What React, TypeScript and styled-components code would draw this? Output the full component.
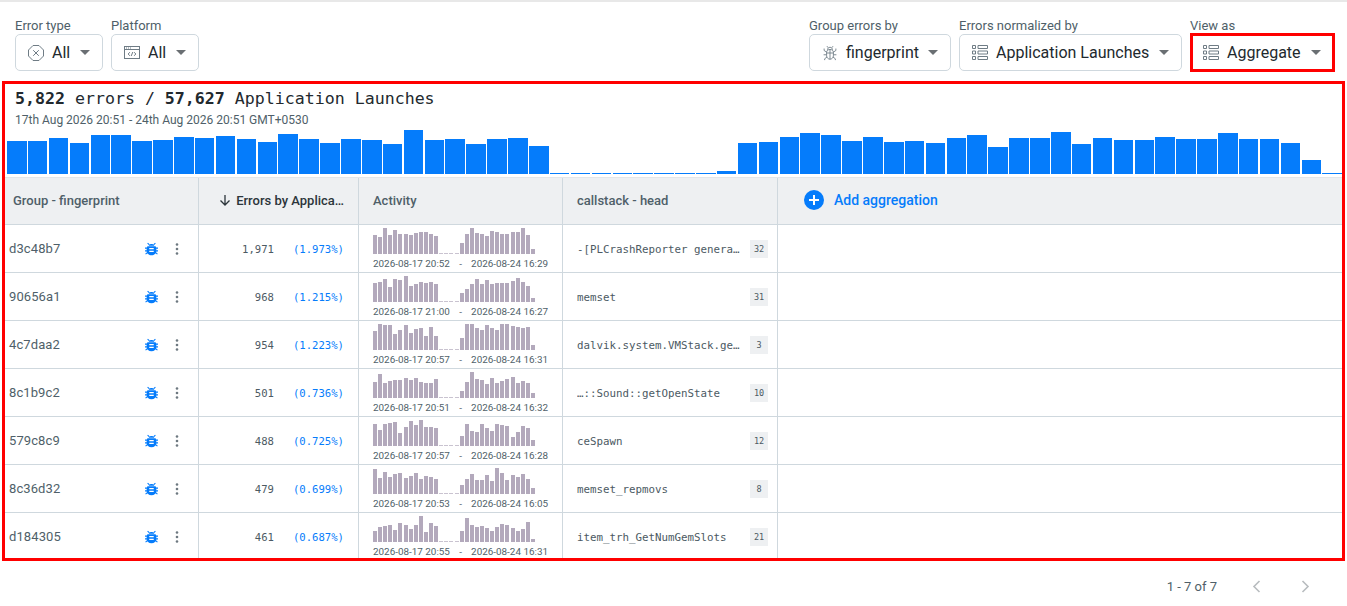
import React from "react";
import styled, { createGlobalStyle } from "styled-components";

const Global = createGlobalStyle`
  html, body { margin: 0; padding: 0; background: #fff; }
  body { font-family: Roboto, "Liberation Sans", sans-serif; color: #22292e; }
  * { box-sizing: border-box; }
`;

const MONO = `"DejaVu Sans Mono", "Liberation Mono", monospace`;
const LABEL = "#4f5f69";
const LINE = "#cfd8de";
const HEAD = "#eef0f2";
const BLUE = "#057cfb";

const Page = styled.div`
  width: 1347px;
  height: 606px;
  overflow: hidden;
  border-top: 2px solid #e8e8e8;
  display: flex;
  flex-direction: column;
`;
const FilterBar = styled.div`
  flex: 0 0 79px;
  padding: 16px 12px 0 15px;
  display: flex;
  justify-content: space-between;
  align-items: flex-start;
`;
const FilterGroup = styled.div`
  display: flex;
  gap: 8px;
`;
const Field = styled.div`
  display: flex;
  flex-direction: column;
`;
const FieldLabel = styled.div`
  font-size: 13px;
  line-height: 16px;
  color: ${LABEL};
`;
const Select = styled.div<{ $w: number; $hot?: boolean }>`
  width: ${(p) => p.$w}px;
  height: ${(p) => (p.$hot ? 39 : 37)}px;
  margin-top: ${(p) => (p.$hot ? -1 : 0)}px;
  border: ${(p) => (p.$hot ? "3px solid #ff0000" : `1px solid ${LINE}`)};
  border-radius: ${(p) => (p.$hot ? 0 : 5)}px;
  padding: 0 ${(p) => (p.$hot ? 11 : 12)}px 0 ${(p) => (p.$hot ? 10 : 12)}px;
  display: flex;
  align-items: center;
  gap: 8px;
  font-size: 16px;
  color: #22292e;
  white-space: nowrap;
`;
const SelectText = styled.span`
  flex: 1;
`;
const Caret = styled.span`
  width: 0;
  height: 0;
  border-left: 5px solid transparent;
  border-right: 5px solid transparent;
  border-top: 5px solid #6a6f73;
`;
const Report = styled.div`
  flex: 0 0 480px;
  width: 1343px;
  margin-left: 2px;
  border: 3px solid #ff0000;
  display: flex;
  flex-direction: column;
  overflow: hidden;
`;
const Summary = styled.div`
  flex: 0 0 93px;
  padding: 5px 0 0 10px;
  display: flex;
  flex-direction: column;
`;
const Title = styled.div`
  font-family: ${MONO};
  font-size: 16.6px;
  line-height: 20px;
  color: #22292e;
  b { font-weight: 700; }
`;
const Range = styled.div`
  font-size: 12px;
  line-height: 14px;
  margin-top: 4px;
  color: ${LABEL};
`;
const Histogram = styled.div`
  flex: 0 0 44px;
  margin: 3px 1px 0 -8px;
  width: 1335px;
  display: grid;
  grid-template-columns: repeat(64, 1fr);
  column-gap: 1.3px;
  align-items: end;
`;
const HistBar = styled.div<{ $h: number }>`
  height: ${(p) => p.$h}px;
  background: ${BLUE};
`;
const HeaderRow = styled.div`
  flex: 0 0 48px;
  display: grid;
  grid-template-columns: 194px 160px 204px 215px 1fr;
  background: ${HEAD};
  border-top: 1px solid #e3e6e9;
  border-bottom: 1px solid ${LINE};
`;
const HeadCell = styled.div<{ $dark?: boolean; $end?: boolean }>`
  display: flex;
  align-items: center;
  gap: 5px;
  padding: 0 14px 2px;
  justify-content: ${(p) => (p.$end ? "flex-end" : "flex-start")};
  border-right: 1px solid ${LINE};
  font-size: 13px;
  font-weight: 500;
  color: ${(p) => (p.$dark ? "#2c353b" : LABEL)};
  white-space: nowrap;
  &:first-child { padding-left: 8px; }
`;
const AddCell = styled(HeadCell)`
  border-right: 0;
  padding-left: 26px;
  gap: 10px;
  color: ${BLUE};
  font-size: 14px;
`;
const Row = styled.div`
  flex: 0 0 48px;
  display: grid;
  grid-template-columns: 194px 160px 204px 215px 1fr;
  border-bottom: 1px solid ${LINE};
  &:last-child { border-bottom-color: transparent; }
`;
const Cell = styled.div`
  border-right: 1px solid ${LINE};
  &:last-child { border-right: 0; }
`;
const GroupCell = styled(Cell)`
  display: flex;
  align-items: center;
  padding-left: 4px;
  font-size: 13px;
  letter-spacing: 0.1px;
  color: ${LABEL};
`;
const GroupId = styled.span`
  flex: 1;
`;
const Kebab = styled.span`
  width: 14px;
  margin: 0 14px 0 12px;
  display: flex;
  justify-content: center;
`;
const CountCell = styled(Cell)`
  display: flex;
  align-items: center;
  justify-content: flex-end;
  padding: 1px 14px 0 0;
  font-family: ${MONO};
  font-size: 10.6px;
  color: #4c5a63;
`;
const Percent = styled.span`
  width: 70px;
  text-align: right;
  color: ${BLUE};
`;
const ActivityCell = styled(Cell)`
  padding: 3px 0 0 14px;
  display: flex;
  flex-direction: column;
`;
const Spark = styled.div`
  flex: 0 0 26px;
  display: flex;
  align-items: flex-end;
  gap: 1.1px;
`;
const SparkBar = styled.div<{ $h: number }>`
  width: 4px;
  height: ${(p) => p.$h}px;
  background: ${(p) => (p.$h < 2 ? "#c9c3d0" : "#b3a9bc")};
`;
const Dates = styled.div`
  margin-top: 3px;
  width: 175px;
  display: flex;
  justify-content: space-between;
  font-size: 9.9px;
  line-height: 13px;
  color: ${LABEL};
  white-space: nowrap;
`;
const StackCell = styled(Cell)`
  display: flex;
  align-items: center;
  padding: 0 9px 0 14px;
  font-family: ${MONO};
  font-size: 10.8px;
  color: #4c5a63;
`;
const StackText = styled.span`
  flex: 1;
  padding-top: 1px;
  white-space: nowrap;
  overflow: hidden;
`;
const Badge = styled.span`
  width: 18px;
  height: 18px;
  background: ${HEAD};
  display: flex;
  align-items: center;
  justify-content: center;
  font-family: ${MONO};
  font-size: 8.5px;
  color: #4c5a63;
`;
const Pager = styled.div`
  flex: 1;
  display: flex;
  align-items: center;
  justify-content: flex-end;
  padding: 5px 37px 0 0;
  font-size: 13px;
  color: ${LABEL};
`;
const PagerText = styled.span`
  margin-right: 35px;
`;
const PagerIcon = styled.span`
  display: flex;
  & + & { margin-left: 40px; }
`;

const ErrorIcon = () => (
  <svg width="16" height="16" viewBox="0 0 16 16" fill="none" stroke="#6f7c85" strokeWidth="1">
    <path d="M5 .5h6L15.5 5v6L11 15.5H5L.5 11V5z" />
    <path d="M5.2 5.2l5.6 5.6M10.8 5.2l-5.6 5.6" />
  </svg>
);
const PlatformIcon = () => (
  <svg width="16" height="13" viewBox="0 0 16 13" fill="none" stroke="#6f7c85" strokeWidth="1">
    <rect x="0.5" y="0.5" width="15" height="12" />
    <path d="M0.5 3.5h15M2 2h1M4 2h1M6 2h1" />
    <path d="M5.8 6.2L4.2 8l1.6 1.8M10.2 6.2L11.8 8l-1.6 1.8M8.8 6L7.2 10" />
  </svg>
);
const BugOutline = () => (
  <svg width="16" height="18" viewBox="0 0 18 18" fill="none" stroke="#6f7c85" strokeWidth="1">
    <path d="M5.2 8c0-1.6 1.6-3 3.8-3s3.8 1.4 3.8 3v4.2c0 2-1.8 3.8-3.8 3.8s-3.8-1.8-3.8-3.8z" />
    <path d="M6.3 5.5C6.3 3.6 7.4 2.6 9 2.6s2.7 1 2.7 2.9M9 5v11M5.2 9H12.8" />
    <path d="M6.8 3L5.6 1.3M11.2 3l1.2-1.7M5.2 8L2.4 6.2V4M12.8 8l2.8-1.8V4M5 11H1.8M13 11h3.2M5.6 13.5l-2.6 2V17M12.4 13.5l2.6 2V17" />
  </svg>
);
const AggIcon = () => (
  <svg width="16" height="17" viewBox="0 0 16 17" fill="none" stroke="#6f7c85" strokeWidth="1">
    <path d="M0.5 1.5h3v3h-3zM0.5 7h3v3h-3zM0.5 12.5h3v3h-3zM6 1.5h9.5v3H6zM6 7h9.5v3H6zM6 12.5h9.5v3H6z" />
  </svg>
);
const BugSolid = () => (
  <svg width="13" height="14" viewBox="0 0 14 14" fill={BLUE} stroke="none">
    <path d="M2.6 4h8.8c.5.9.8 1.8.8 2.8v2.9c0 2.2-2.2 4-5.2 4s-5.2-1.8-5.2-4V6.8c0-1 .3-1.9.8-2.8z" />
    <path d="M4 3.5C4.6 2.3 5.7 1.7 7 1.7s2.4.6 3 1.8z" />
    <path d="M3.2 .2l2 2-.8.8-2-2zM10.8 .2l-2 2 .8.8 2-2z" />
    <path d="M0 5.5h2.6v1.3H0zM11.4 5.5H14v1.3h-2.6zM0 8.4h2.6v1.3H0zM11.4 8.4H14v1.3h-2.6zM.2 12l2-1.6.8 1-2 1.6zM13.8 12l-2-1.6-.8 1 2 1.6z" />
    <path d="M4.6 6h4.8v1.3H4.6zM4.6 9h4.8v1.3H4.6z" fill="#fff" />
  </svg>
);
const Dots = () => (
  <svg width="4" height="12" viewBox="0 0 4 12" fill="#6d7880">
    <circle cx="2" cy="1.5" r="1.3" />
    <circle cx="2" cy="6" r="1.3" />
    <circle cx="2" cy="10.5" r="1.3" />
  </svg>
);
const ArrowDown = () => (
  <svg width="12" height="12" viewBox="0 0 12 12" fill="none" stroke="#2c353b" strokeWidth="1.3">
    <path d="M6 1v10M1.5 6.5L6 11l4.5-4.5" />
  </svg>
);
const PlusCircle = () => (
  <svg width="20" height="20" viewBox="0 0 20 20">
    <circle cx="10" cy="10" r="10" fill={BLUE} />
    <path d="M10 5v10M5 10h10" stroke="#fff" strokeWidth="2" />
  </svg>
);
const Chevron = ({ d }: { d: string }) => (
  <svg width="9" height="13" viewBox="0 0 9 13" fill="none" stroke="#b8bcbf" strokeWidth="1.6">
    <path d={d} />
  </svg>
);

const histogram = [
  33, 33, 36, 31, 39, 39, 33, 34, 37, 36, 38, 35, 32, 40, 35, 31, 35, 34, 30, 44, 34, 35, 30, 35, 36, 28,
  1, 1, 1, 1, 1, 1, 1, 1, 3,
  31, 32, 37, 41, 39, 33, 37, 32, 33, 31, 36, 39, 27, 36, 36, 42, 30, 36, 34, 34, 37, 35, 35, 41, 35, 35, 31, 14, 1,
];

const gap = [1, 1, 1, 1];
const rows = [
  { id: "d3c48b7", count: "1,971", pct: "(1.973%)", from: "2026-08-17 20:52", to: "2026-08-24 16:29", stack: "-[PLCrashReporter genera…", n: "32",
    bars: [19, 17, 26, 19, 24, 20, 20, 19, 21, 22, 22, 20, 18, ...gap, 11, 20, 26, 21, 20, 18, 23, 22, 20, 20, 22, 22, 26, 19, 5] },
  { id: "90656a1", count: "968", pct: "(1.215%)", from: "2026-08-17 21:00", to: "2026-08-24 16:27", stack: "memset", n: "31",
    bars: [19, 20, 23, 15, 23, 22, 26, 16, 18, 20, 19, 20, 18, ...gap, 9, 13, 18, 23, 18, 22, 18, 19, 19, 19, 21, 24, 20, 16, 4] },
  { id: "4c7daa2", count: "954", pct: "(1.223%)", from: "2026-08-17 20:57", to: "2026-08-24 16:31", stack: "dalvik.system.VMStack.ge…", n: "3",
    bars: [19, 26, 25, 25, 16, 20, 25, 17, 21, 22, 14, 23, 14, ...gap, 12, 26, 26, 22, 20, 25, 22, 20, 26, 26, 24, 23, 22, 23, 5] },
  { id: "8c1b9c2", count: "501", pct: "(0.736%)", from: "2026-08-17 20:51", to: "2026-08-24 16:32", stack: "…::Sound::getOpenState", n: "10",
    bars: [16, 24, 15, 17, 18, 18, 20, 18, 20, 16, 15, 15, 19, ...gap, 7, 16, 26, 19, 18, 14, 20, 15, 17, 19, 21, 15, 17, 15, 5] },
  { id: "579c8c9", count: "488", pct: "(0.725%)", from: "2026-08-17 20:57", to: "2026-08-24 16:28", stack: "ceSpawn", n: "12",
    bars: [22, 16, 22, 23, 24, 13, 19, 25, 21, 26, 19, 19, 18, ...gap, 10, 22, 15, 14, 22, 18, 15, 22, 21, 20, 9, 14, 20, 18, 6] },
  { id: "8c36d32", count: "479", pct: "(0.699%)", from: "2026-08-17 20:53", to: "2026-08-24 16:05", stack: "memset_repmovs", n: "8",
    bars: [25, 16, 22, 17, 20, 21, 16, 18, 21, 15, 18, 17, 15, ...gap, 9, 15, 20, 14, 14, 19, 13, 26, 21, 14, 19, 17, 20, 15, 6] },
  { id: "d184305", count: "461", pct: "(0.687%)", from: "2026-08-17 20:55", to: "2026-08-24 16:31", stack: "item_trh_GetNumGemSlots", n: "21",
    bars: [11, 15, 16, 17, 12, 19, 17, 13, 17, 26, 10, 19, 16, ...gap, 11, 24, 17, 15, 16, 14, 11, 15, 18, 17, 14, 11, 13, 20, 3] },
];

export default function App() {
  return (
    <Page>
      <Global />
      <FilterBar>
        <FilterGroup>
          <Field>
            <FieldLabel>Error type</FieldLabel>
            <Select $w={88}><ErrorIcon /><SelectText>All</SelectText><Caret /></Select>
          </Field>
          <Field>
            <FieldLabel>Platform</FieldLabel>
            <Select $w={88}><PlatformIcon /><SelectText>All</SelectText><Caret /></Select>
          </Field>
        </FilterGroup>
        <FilterGroup>
          <Field>
            <FieldLabel>Group errors by</FieldLabel>
            <Select $w={142}><BugOutline /><SelectText>fingerprint</SelectText><Caret /></Select>
          </Field>
          <Field>
            <FieldLabel>Errors normalized by</FieldLabel>
            <Select $w={223}><AggIcon /><SelectText>Application Launches</SelectText><Caret /></Select>
          </Field>
          <Field>
            <FieldLabel>View as</FieldLabel>
            <Select $w={145} $hot><AggIcon /><SelectText>Aggregate</SelectText><Caret /></Select>
          </Field>
        </FilterGroup>
      </FilterBar>
      <Report>
        <Summary>
          <Title><b>5,822</b> errors / <b>57,627</b> Application Launches</Title>
          <Range>17th Aug 2026 20:51 - 24th Aug 2026 20:51 GMT+0530</Range>
          <Histogram>
            {histogram.map((h, i) => <HistBar key={i} $h={h} />)}
          </Histogram>
        </Summary>
        <HeaderRow>
          <HeadCell>Group - fingerprint</HeadCell>
          <HeadCell $dark $end><ArrowDown /><span>Errors by Applica…</span></HeadCell>
          <HeadCell>Activity</HeadCell>
          <HeadCell>callstack - head</HeadCell>
          <AddCell><PlusCircle />Add aggregation</AddCell>
        </HeaderRow>
        {rows.map((r) => (
          <Row key={r.id}>
            <GroupCell>
              <GroupId>{r.id}</GroupId>
              <BugSolid />
              <Kebab><Dots /></Kebab>
            </GroupCell>
            <CountCell>
              <span>{r.count}</span>
              <Percent>{r.pct}</Percent>
            </CountCell>
            <ActivityCell>
              <Spark>{r.bars.map((h, i) => <SparkBar key={i} $h={h} />)}</Spark>
              <Dates><span>{r.from}</span><span>-</span><span>{r.to}</span></Dates>
            </ActivityCell>
            <StackCell>
              <StackText>{r.stack}</StackText>
              <Badge>{r.n}</Badge>
            </StackCell>
            <Cell />
          </Row>
        ))}
      </Report>
      <Pager>
        <PagerText>1 - 7 of 7</PagerText>
        <PagerIcon><Chevron d="M7.5 1L2 6.5 7.5 12" /></PagerIcon>
        <PagerIcon><Chevron d="M1.5 1L7 6.5 1.5 12" /></PagerIcon>
      </Pager>
    </Page>
  );
}
